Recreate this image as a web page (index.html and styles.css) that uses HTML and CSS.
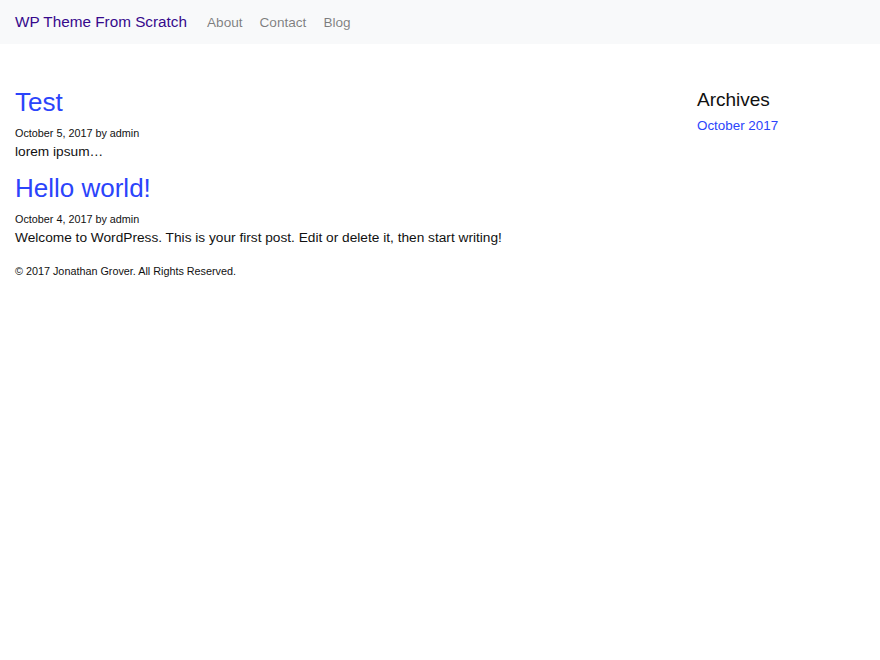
FILE: index.html
```html
<!DOCTYPE html>
<html>
<head>
<meta charset="utf-8">
<link rel="stylesheet" href="styles.css">
</head>
<body>
<nav class="navbar">
  <a class="brand" href="#">WP Theme From Scratch</a>
  <ul class="nav">
    <li><a href="#">About</a></li>
    <li><a href="#">Contact</a></li>
    <li><a href="#">Blog</a></li>
  </ul>
</nav>
<div class="container">
  <main class="main">
    <article class="post">
      <h2 class="post-title"><a href="#">Test</a></h2>
      <p class="meta">October 5, 2017 by admin</p>
      <p class="excerpt">lorem ipsum…</p>
    </article>
    <article class="post">
      <h2 class="post-title"><a href="#">Hello world!</a></h2>
      <p class="meta">October 4, 2017 by admin</p>
      <p class="excerpt">Welcome to WordPress. This is your first post. Edit or delete it, then start writing!</p>
    </article>
    <footer class="footer">© 2017 Jonathan Grover. All Rights Reserved.</footer>
  </main>
  <aside class="sidebar">
    <h3 class="widget-title">Archives</h3>
    <a class="archive-link" href="#">October 2017</a>
  </aside>
</div>
</body>
</html>
```
FILE: styles.css
```css
* { box-sizing: border-box; }
body {
  margin: 0;
  font-family: "Liberation Sans", Arial, sans-serif;
  color: #212529;
  background: #fff;
}
a { text-decoration: none; }
.navbar {
  height: 44px;
  background: #f8f9fa;
  display: flex;
  align-items: center;
  padding: 0 15px;
}
.brand {
  font-size: 15.3px;
  color: #36098c;
  margin-right: 20px;
}
.nav {
  list-style: none;
  margin: 0;
  padding: 0;
  display: flex;
  gap: 17px;
}
.nav a {
  font-size: 13.6px;
  color: rgba(0,0,0,0.5);
}
.container {
  display: grid;
  grid-template-columns: 682px 1fr;
  padding: 0 15px;
}
.main { padding-top: 42px; }
.post + .post { margin-top: 10px; }
.post-title {
  margin: 0;
  font-size: 26px;
  font-weight: normal;
  line-height: 32px;
}
.post-title a { color: #2b44fb; }
.meta {
  margin: 7px 0 0;
  font-size: 10.8px;
  line-height: 16px;
  color: #111;
}
.excerpt {
  margin: 0;
  font-size: 13.7px;
  line-height: 21px;
  color: #111;
}
.footer {
  margin-top: 16px;
  font-size: 10.8px;
  line-height: 14px;
  color: #111;
}
.sidebar { padding-top: 44px; }
.widget-title {
  margin: 0;
  font-size: 19px;
  font-weight: normal;
  line-height: 24px;
  color: #111;
}
.archive-link {
  display: block;
  margin-top: 6px;
  font-size: 13.4px;
  line-height: 16px;
  color: #2b44fb;
}
```
